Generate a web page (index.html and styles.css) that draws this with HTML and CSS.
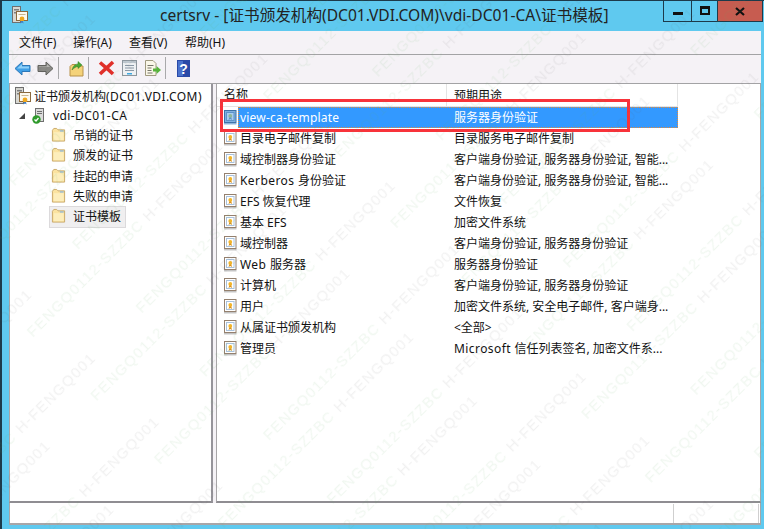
FILE: index.html
```html
<!DOCTYPE html>
<html lang="zh-CN">
<head>
<meta charset="utf-8">
<title>certsrv</title>
<link rel="stylesheet" href="styles.css">
</head>
<body>
<svg class="defs" width="0" height="0" aria-hidden="true">
  <defs>
    <g id="cert">
      <path d="M1 13h12.500v1.500H1z" fill="#c4c4c4"/>
      <rect x="1.500" y=".5" width="11.500" height="12" fill="#fff" stroke="#94806e"/>
      <rect x="3.500" y="2.500" width="7.500" height="8" fill="#fff" stroke="#a9c2dc"/>
      <circle cx="7.300" cy="6" r="1.900" fill="#f3b62a"/>
      <path d="M6.300 7.500l-.8 2.500 1.800-1 1.800 1-.8-2.500z" fill="#d9921c"/>
    </g>
    <g id="certsel">
      <path d="M1 13h12.500v1.500H1z" fill="#8cb4dc"/>
      <rect x="1.500" y=".5" width="11.500" height="12" fill="#7fb0e0" stroke="#3f72a8"/>
      <rect x="3.500" y="2.500" width="7.500" height="8" fill="#a9cdf0" stroke="#5f93c8"/>
      <circle cx="7.300" cy="6" r="1.900" fill="#8fb89a"/>
      <path d="M6.300 7.500l-.8 2.500 1.800-1 1.800 1-.8-2.500z" fill="#5f93c8"/>
    </g>
    <g id="folder">
      <path d="M1.500 3V14.500H14.500V2.500H7.500L6 1H3z" fill="#fbe3a0" stroke="#c9a868"/>
      <path d="M3 5H13.500V13.500H3z" fill="#fdeebc"/>
      <path d="M9.500 3h4v1.400h-4z" fill="#8fb8dc"/>
    </g>
    <g id="rootcert">
      <rect x="0.500" y="0.500" width="8" height="16" fill="#d8d8d2" stroke="#6f6f6f"/>
      <path d="M2 3h5v1.500H2zM2 6h5v1.500H2z" fill="#7f7f7f"/>
      <rect x="4.500" y="5.500" width="11" height="9" fill="#fdfaf0" stroke="#8c6a3e"/>
      <path d="M6.500 8h7v1h-7z" fill="#c9b68f"/>
      <circle cx="10" cy="13" r="2.400" fill="#f0a81e"/>
      <path d="M9 15l-.6 2.500 1.600-1 1.600 1L11 15z" fill="#3f7fc9"/>
    </g>
  </defs>
</svg>
<div class="window">
  <header class="titlebar">
    <svg class="appicon" width="16" height="18" viewBox="0 0 16 18"><use href="#rootcert"/></svg>
    <div class="title">certsrv - [证书颁发机构(DC01.VDI.COM)\vdi-DC01-CA\证书模板]</div>
    <div class="controls">
      <div class="ctl ctl-min"><span class="min-glyph"></span></div>
      <div class="ctl ctl-max"><span class="max-glyph"></span></div>
      <div class="ctl ctl-close">
        <svg width="10" height="9" viewBox="0 0 10 9"><path d="M1 1l8 7M9 1L1 8" stroke="#111" stroke-width="2.200" fill="none"/></svg>
      </div>
    </div>
  </header>
  <nav class="menubar">
    <span class="menu menu-first">文件(F)</span>
    <span class="menu">操作(A)</span>
    <span class="menu">查看(V)</span>
    <span class="menu">帮助(H)</span>
  </nav>
  <div class="toolbar">
    <svg class="tool t-first" width="17" height="15" viewBox="0 0 17 15"><path d="M8 1L1 7.500 8 14V10.500H16V4.500H8z" fill="#3f9fe6" stroke="#2f78b8"/><path d="M8 3v2.500h7v2H3z" fill="#8fd0f8"/></svg>
    <svg class="tool t-fwd" width="17" height="15" viewBox="0 0 17 15"><path d="M9 1l7 6.500L9 14V10.500H1V4.500H9z" fill="#8a8a86" stroke="#62625e"/><path d="M2 5.500h8V3l3 3H2z" fill="#b4b4b0"/></svg>
    <span class="sep s1"></span>
    <svg class="tool t-up" width="15" height="17" viewBox="0 0 15 17"><path d="M1 6.500V16H14V6H8L6.500 4.500H3z" fill="#f4d27a" stroke="#b8924a"/><path d="M3 10c1-4 3-6 6-6V1.500L13 5 9 8.500V6.500C7 6.500 5 8 3 10z" fill="#4aa834" stroke="#2f7a20" stroke-width=".5"/></svg>
    <span class="sep s2"></span>
    <svg class="tool t-del" width="17" height="16" viewBox="0 0 17 16"><path d="M2 2.500l6.500 5.500L15 2M2 14l6.500-6L15 14" stroke="#e0302a" stroke-width="3.600" fill="none"/></svg>
    <svg class="tool t-prop" width="15" height="16" viewBox="0 0 15 16"><rect x=".5" y=".5" width="14" height="15" fill="#eef1f3" stroke="#8d979e"/><rect x="1" y="1" width="13" height="2" fill="#bfc9d0"/><path d="M3 5h9v1H3zM3 7.500h9v1H3zM3 10h9v1H3z" fill="#8a98a6"/><path d="M5 13h5v1.500H5z" fill="#3fa9e0"/></svg>
    <svg class="tool t-exp" width="16" height="16" viewBox="0 0 16 16"><path d="M.5.5H8L11 3.500V15.500H.5z" fill="#faf7e8" stroke="#a09a80"/><path d="M2.500 5h6v1h-6zM2.500 7.500h4v1h-4zM2.500 10h4v1h-4zM2.500 12.500h5v1h-5z" fill="#77766a"/><path d="M8 8.500h3.500V6L16 10l-4.500 4v-2.500H8z" fill="#58b43c"/></svg>
    <span class="sep s3"></span>
    <svg class="tool t-help" width="13" height="17" viewBox="0 0 13 17"><rect width="13" height="17" fill="#2a4aa8"/><rect x="1" y="1" width="5" height="15" fill="#4a72cc"/><text class="helpq" x="6.500" y="13.500">?</text></svg>
  </div>
  <main class="panes">
    <aside class="tree">
      <div class="node node-root"><svg width="16" height="18" viewBox="0 0 16 18"><use href="#rootcert"/></svg><span>证书颁发机构<span class="lat-w">(DC01.VDI.COM)</span></span></div>
      <div class="node node-ca">
        <span class="caret"></span>
        <svg width="13" height="16" viewBox="0 0 13 16"><rect x="3.500" y=".5" width="8" height="13" fill="#dcdcdc" stroke="#6f6f6f"/><path d="M5 3h5v1H5zM5 5h5v1H5z" fill="#6f6f6f"/><circle cx="4.500" cy="11.500" r="4.200" fill="#2f9a2c"/><path d="M2.500 11.500l1.500 1.500 2.500-3" stroke="#fff" stroke-width="1.300" fill="none"/></svg>
        <span class="ca-label lat-w">vdi-DC01-CA</span>
      </div>
      <div class="node node-leaf"><svg width="15" height="16" viewBox="0 0 16 16"><use href="#folder"/></svg><span>吊销的证书</span></div>
      <div class="node node-leaf"><svg width="15" height="16" viewBox="0 0 16 16"><use href="#folder"/></svg><span>颁发的证书</span></div>
      <div class="node node-leaf"><svg width="15" height="16" viewBox="0 0 16 16"><use href="#folder"/></svg><span>挂起的申请</span></div>
      <div class="node node-leaf"><svg width="15" height="16" viewBox="0 0 16 16"><use href="#folder"/></svg><span>失败的申请</span></div>
      <div class="node node-leaf node-current"><svg width="15" height="16" viewBox="0 0 16 16"><use href="#folder"/></svg><span>证书模板</span></div>
    </aside>
    <section class="list">
      <div class="head"><span class="h1">名称</span><span class="h2">预期用途</span></div>
      <div class="row row-selected"><svg width="15" height="15" viewBox="0 0 15 15"><use href="#certsel"/></svg><div class="cells"><span class="c1 lat">view-ca-template</span><span class="c2">服务器身份验证</span></div></div>
      <div class="row"><svg width="15" height="15" viewBox="0 0 15 15"><use href="#cert"/></svg><div class="cells"><span class="c1">目录电子邮件复制</span><span class="c2">目录服务电子邮件复制</span></div></div>
      <div class="row"><svg width="15" height="15" viewBox="0 0 15 15"><use href="#cert"/></svg><div class="cells"><span class="c1">域控制器身份验证</span><span class="c2">客户端身份验证, 服务器身份验证, 智能...</span></div></div>
      <div class="row"><svg width="15" height="15" viewBox="0 0 15 15"><use href="#cert"/></svg><div class="cells"><span class="c1"><span class="lat-w">Kerberos </span>身份验证</span><span class="c2">客户端身份验证, 服务器身份验证, 智能...</span></div></div>
      <div class="row"><svg width="15" height="15" viewBox="0 0 15 15"><use href="#cert"/></svg><div class="cells"><span class="c1">EFS 恢复代理</span><span class="c2">文件恢复</span></div></div>
      <div class="row"><svg width="15" height="15" viewBox="0 0 15 15"><use href="#cert"/></svg><div class="cells"><span class="c1">基本 EFS</span><span class="c2">加密文件系统</span></div></div>
      <div class="row"><svg width="15" height="15" viewBox="0 0 15 15"><use href="#cert"/></svg><div class="cells"><span class="c1">域控制器</span><span class="c2">客户端身份验证, 服务器身份验证</span></div></div>
      <div class="row"><svg width="15" height="15" viewBox="0 0 15 15"><use href="#cert"/></svg><div class="cells"><span class="c1"><span class="lat-w">Web </span>服务器</span><span class="c2">服务器身份验证</span></div></div>
      <div class="row"><svg width="15" height="15" viewBox="0 0 15 15"><use href="#cert"/></svg><div class="cells"><span class="c1">计算机</span><span class="c2">客户端身份验证, 服务器身份验证</span></div></div>
      <div class="row"><svg width="15" height="15" viewBox="0 0 15 15"><use href="#cert"/></svg><div class="cells"><span class="c1">用户</span><span class="c2">加密文件系统, 安全电子邮件, 客户端身...</span></div></div>
      <div class="row"><svg width="15" height="15" viewBox="0 0 15 15"><use href="#cert"/></svg><div class="cells"><span class="c1">从属证书颁发机构</span><span class="c2">&lt;全部&gt;</span></div></div>
      <div class="row"><svg width="15" height="15" viewBox="0 0 15 15"><use href="#cert"/></svg><div class="cells"><span class="c1">管理员</span><span class="c2"><span class="lat-w">Microsoft </span>信任列表签名, 加密文件系...</span></div></div>
    </section>
  </main>
  <footer class="status"><span class="st st-a"></span><span class="st st-b"></span></footer>
</div>
<div class="callout"></div>
<svg class="watermark" width="764" height="529" viewBox="0 0 764 529" aria-hidden="true">
  <defs>
    <pattern id="wm" width="334" height="90" patternUnits="userSpaceOnUse" patternTransform="translate(64 236) rotate(-45)">
      <text class="wm-t" x="0" y="20" textLength="269"><tspan class="wm-g">FENGQ0112-SZZBC</tspan> <tspan class="wm-d">H-FENGQ001</tspan></text>
      <text class="wm-t" x="240" y="50" textLength="269"><tspan class="wm-g">FENGQ0112-SZZBC</tspan> <tspan class="wm-d">H-FENGQ001</tspan></text>
      <text class="wm-t" x="-94" y="50" textLength="269"><tspan class="wm-g">FENGQ0112-SZZBC</tspan> <tspan class="wm-d">H-FENGQ001</tspan></text>
    </pattern>
  </defs>
  <rect width="764" height="529" fill="url(#wm)"/>
</svg>
</body>
</html>
```

FILE: styles.css
```css
* { box-sizing: border-box; }
html, body { margin: 0; padding: 0; }
body {
  width: 764px;
  height: 529px;
  overflow: hidden;
  position: relative;
  background: #5fc9ef;
  font-family: "Noto Sans", "Noto Sans CJK SC", sans-serif;
  font-size: 12px;
  color: #111;
}
.defs { position: absolute; }
.lat { letter-spacing: .2px; }
.lat-w { letter-spacing: .42px; }
.window {
  width: 764px;
  height: 529px;
  display: flex;
  flex-direction: column;
  background: #5fc9ef;
  border-top: 1px solid #1d3a4a;
  border-left: 2px solid #1d3a4a;
  padding: 0 3px 4px 7px;
}
.titlebar {
  height: 30px;
  flex: none;
  display: flex;
  align-items: flex-start;
  position: relative;
}
.appicon { margin: 5px 0 0 3px; }
.title {
  position: absolute;
  left: 151px;
  top: 4px;
  font-size: 15.600px;
  line-height: 20px;
  white-space: nowrap;
  color: #222;
}
.controls {
  margin-left: auto;
  margin-right: -2px;
  display: flex;
  height: 21px;
  border: 1px solid #1d3a4a;
  border-top: 0;
}
.ctl {
  display: flex;
  align-items: center;
  justify-content: center;
  border-left: 1px solid #1d3a4a;
}
.ctl:first-child { border-left: 0; }
.ctl-min { width: 27px; }
.ctl-max { width: 26px; }
.ctl-close { width: 45px; background: #c75c50; }
.min-glyph { width: 10px; height: 3px; background: #111; margin-top: 5px; }
.max-glyph { width: 10px; height: 9px; border: 2px solid #111; border-top-width: 3px; margin-top: -2px; }
.menubar {
  height: 24px;
  flex: none;
  display: flex;
  gap: 16px;
  align-items: center;
  padding-left: 10px;
  background: #f5f2f6;
  border-bottom: 1px solid #a3a3a5;
}
.menu { line-height: 23px; white-space: nowrap; width: 40px; }
.menu-first { width: 38px; }
.toolbar {
  height: 28px;
  flex: none;
  display: flex;
  align-items: center;
  padding-bottom: 2px;
  background: #f5f2f6;
}
.tool { flex: none; }
.t-first { margin-left: 5px; }
.t-fwd { margin-left: 6px; }
.sep { flex: none; width: 1px; height: 22px; background: #a9a9ab; }
.s1 { margin-left: 4px; }
.t-up { margin-left: 10px; }
.s2 { margin-left: 4px; }
.t-del { margin-left: 9px; }
.t-prop { margin-left: 7px; }
.t-exp { margin-left: 8px; }
.s3 { margin-left: 4px; }
.t-help { margin-left: 11px; }
.helpq { font-family: "Liberation Sans", sans-serif; font-size: 14px; font-weight: 700; fill: #fff; text-anchor: middle; }
.panes {
  flex: 1;
  min-height: 0;
  display: flex;
  background: #f5f2f6;
  border-top: 1px solid #a3a3a5;
}
.tree {
  width: 204px;
  flex: none;
  background: #fff;
  border-left: 1px solid #a8a6a8;
  border-right: 2px solid #96949a;
  border-bottom: 2px solid #8f8d92;
  padding-top: 2px;
}
.node {
  height: 20.300px;
  display: flex;
  align-items: center;
  white-space: nowrap;
}
.node-root { padding-left: 5px; gap: 3px; height: 20px; }
.node-ca { padding-left: 9px; height: 19px; }
.ca-label { margin-left: 8px; }
.caret {
  width: 0;
  height: 0;
  margin-right: 7px;
  border-style: solid;
  border-width: 0 0 6px 6px;
  border-color: transparent transparent #444 transparent;
}
.node-leaf { padding-left: 41px; gap: 7px; }
.node-current { position: relative; }
.node-current::before {
  content: "";
  position: absolute;
  left: 39px;
  top: 0;
  width: 75px;
  height: 20px;
  background: #f0eff0;
  border: 1px solid #dcdadc;
}
.node-current svg, .node-current span { position: relative; }
.list {
  margin-left: 3px;
  flex: 1;
  min-width: 0;
  background: #fff;
  border-left: 1px solid #a8a6a8;
  border-bottom: 2px solid #8f8d92;
  border-right: 1px solid #a8a6a8;
}
.head {
  height: 22.500px;
  width: 461px;
  display: flex;
  align-items: center;
  border-bottom: 1px solid #e4e4e4;
  border-right: 1px solid #e4e4e4;
}
.h1 { width: 230px; padding-left: 7px; border-right: 1px solid #e4e4e4; line-height: 22px; }
.h2 { padding-left: 7px; }
.row {
  height: 21px;
  width: 461px;
  display: flex;
  align-items: center;
  padding-left: 6px;
  white-space: nowrap;
}
.row svg { flex: none; }
.cells { flex: 1; display: flex; height: 21px; align-items: center; padding-left: 2px; }
.c1 { width: 214px; }
.row-selected .cells {
  background: #3399ff;
  color: #fff;
  outline: 1px dotted #e08a40;
  outline-offset: -1px;
}
.callout {
  position: absolute;
  left: 220px;
  top: 99px;
  width: 410px;
  height: 33px;
  border: 3px solid #f8333a;
}
.status {
  height: 22px;
  flex: none;
  display: flex;
  background: #fff;
  border-left: 1px solid #a8a6a8;
  border-bottom: 2px solid #a8a6a8;
  border-right: 1px solid #a8a6a8;
  justify-content: flex-end;
}
.st { border-right: 1px solid #cfcfcf; height: 19px; margin-top: 1px; }
.st-a { width: 0; margin-right: 84px; }
.st-b { width: 0; margin-right: 1px; }
.watermark {
  position: absolute;
  left: 0;
  top: 0;
  pointer-events: none;
}
.wm-t { font-family: "Liberation Sans", sans-serif; font-size: 15px; }
.wm-g { fill: rgba(90, 170, 90, 0.09); }
.wm-d { fill: rgba(80, 80, 80, 0.08); }
```
